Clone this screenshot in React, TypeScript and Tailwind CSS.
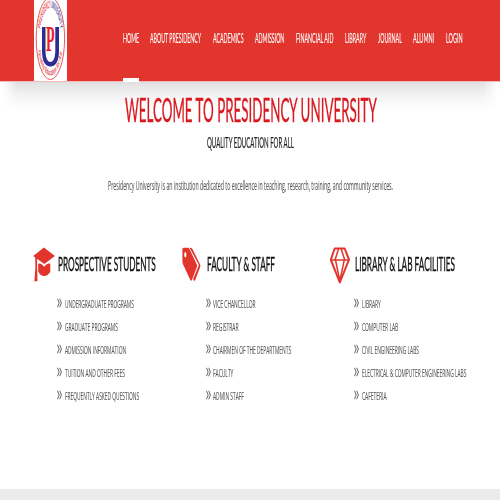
import { useLayoutEffect, useRef, useState } from "react";

type FitProps = { text: string; width: number; className?: string };

/* Condenses one line of text horizontally so that it fills the given width. */
function Fit({ text, width, className = "" }: FitProps) {
  const ref = useRef<HTMLSpanElement>(null);
  const [scale, setScale] = useState(0.6);
  useLayoutEffect(() => {
    const measure = () => {
      if (ref.current) setScale(width / ref.current.offsetWidth);
    };
    measure();
    document.fonts.ready.then(measure);
  }, [width, text]);
  return (
    <span className={`block shrink-0 overflow-visible whitespace-nowrap ${className}`} style={{ width }}>
      <span ref={ref} className="inline-block origin-left" style={{ transform: `scaleX(${scale})` }}>
        {text}
      </span>
    </span>
  );
}

const nav: [string, number][] = [
  ["HOME", 16],
  ["ABOUT PRESIDENCY", 51],
  ["ACADEMICS", 30.5],
  ["ADMISSION", 29.5],
  ["FINANCIAL AID", 37.5],
  ["LIBRARY", 21.5],
  ["JOURNAL", 24],
  ["ALUMNI", 21],
  ["LOGIN", 16.5],
];

function Logo() {
  return (
    <svg className="block h-[81px] w-[33px]" viewBox="0 0 33 81">
      <rect width="33" height="81" fill="#fff" />
      <ellipse cx="16.4" cy="38.5" rx="14.2" ry="41" fill="none" stroke="#e5454b" strokeWidth="0.9" />
      <g transform="translate(16.4 38.5) scale(1 2.9)">
        <path id="ring-top" d="M-10.300 -2.800A10.700 10.700 0 0 1 10.300 -2.800" fill="none" />
        <path id="ring-bottom" d="M-12.300 3.200A12.700 12.700 0 0 0 12.300 3.200" fill="none" />
        <g fontFamily="Liberation Sans, sans-serif" fontWeight="700">
          <text fontSize="3.7" textLength="27" lengthAdjust="spacingAndGlyphs">
            <textPath href="#ring-top" startOffset="0.3">
              <tspan fill="#df3d49">PRESIDENCY </tspan>
              <tspan fill="#41419c">UNIVERSITY</tspan>
            </textPath>
          </text>
          <text fontSize="2.9" fill="#df3d49" textLength="30" lengthAdjust="spacingAndGlyphs">
            <textPath href="#ring-bottom" startOffset="1.3">Quality Education for All</textPath>
          </text>
        </g>
      </g>
      <path d="M8 27h3.500v23c0 8 1.900 12 4.900 12s4.900-4 4.900-12V27H25v24c0 10-3.200 15.500-8.500 15.500S8 61 8 51z" fill="#2b2d93" />
      <text transform="translate(12 51) scale(.39 1)" fontFamily="Liberation Serif, serif" fontWeight="700" fontSize="36" fill="#ed1c2b">P</text>
    </svg>
  );
}

function CapIcon() {
  return (
    <svg className="block h-[36px] w-[22px]" viewBox="0 0 22 36" fill="#e2332d">
      <path d="M10.900 .5 21.900 8.900 11.300 17 .2 9z" />
      <path d="M2.200 10.300h1.900v9.200L4.500 34l-3.100.5 1-14.500z" />
      <path d="M5.200 16.500c2.300-.4 4.200.800 6 3.200 1.800-2.400 3.700-3.600 6.100-3.200v8c-1.500 3-3.700 4.500-6.100 4.500s-4.500-1.500-6-4.500z" />
    </svg>
  );
}

function TagsIcon() {
  return (
    <svg className="block h-[36px] w-[22px]" viewBox="0 0 22 36">
      <path fillRule="evenodd" fill="#e2332d" d="M.4 2.500Q.4.700 1.600.7H5.500q1.200 0 2 1.400l7.200 15.100q.7 1.400.2 2.900L10 32.800q-.9 2-1.800 0L1 17.200Q.4 15.800.4 14zM3.300 5.100q-1.100 0-1.100 2.700t1.100 2.700 1.100-2.700-1.100-2.700z" />
      <path fill="#e2332d" d="M7.500.8h1.200q1.200 0 2 1.600l7.300 14.800q.7 1.400.2 2.900l-4.900 12.700q-.8 2-1.700.5l-.5-1.200 5.300-12.700q.5-1.300-.1-2.600z" />
    </svg>
  );
}

function DiamondIcon() {
  return (
    <svg className="block h-[38px] w-[20px]" viewBox="0 0 20 38" fill="none" stroke="#e2332d" strokeWidth="1.500" strokeLinejoin="round">
      <path strokeWidth="2" d="M4.700 1.500h10L19 12.700 9.800 35.500.8 12.700z" />
      <path d="M.8 12.900H19M5.500 12.900 9.800 34l4.500-21.100M5 12.900 8.500 2M14.800 12.900 11.200 2" />
    </svg>
  );
}

function Chevrons() {
  return (
    <svg className="block h-[10px] w-[5px] shrink-0" viewBox="0 0 5 10" fill="none" stroke="#555" strokeWidth="0.9">
      <path d="M.5.8 2.200 5 .5 9.200M2.700.8 4.400 5 2.700 9.200" />
    </svg>
  );
}

type Column = { title: string; width: number; icon: () => React.JSX.Element; items: [string, number][] };

const columns: Column[] = [
  {
    title: "PROSPECTIVE STUDENTS",
    width: 98,
    icon: CapIcon,
    items: [
      ["UNDERGRADUATE PROGRAMS", 69],
      ["GRADUATE PROGRAMS", 53],
      ["ADMISSION INFORMATION", 61],
      ["TUITION AND OTHER FEES", 60],
      ["FREQUENTLY ASKED QUESTIONS", 74],
    ],
  },
  {
    title: "FACULTY & STAFF",
    width: 68,
    icon: TagsIcon,
    items: [
      ["VICE CHANCELLOR", 42.5],
      ["REGISTRAR", 25.5],
      ["CHAIRMEN OF THE DEPARTMENTS", 78],
      ["FACULTY", 20.5],
      ["ADMIN STAFF", 31],
    ],
  },
  {
    title: "LIBRARY & LAB FACILITIES",
    width: 100,
    icon: DiamondIcon,
    items: [
      ["LIBRARY", 19],
      ["COMPUTER LAB", 36],
      ["CIVIL ENGINEERING LABS", 57],
      ["ELECTRICAL & COMPUTER ENGINEERING LABS", 104.5],
      ["CAFETERIA", 24.5],
    ],
  },
];

export default function App() {
  return (
    <div className="flex h-[500px] w-[500px] flex-col overflow-hidden bg-white font-['Open_Sans',sans-serif]">
      <header className="flex h-[82px] shrink-0 border-b border-[#f4b9b6] bg-[#e2352e] pl-[34px]">
        <Logo />
        <nav className="ml-[55.500px] flex gap-[11.500px] font-['Lato',sans-serif] text-[12.500px] leading-[16px] text-white [-webkit-text-stroke:0.1px]">
          {nav.map(([label, width], i) => (
            <a key={label} className="flex h-[82px] flex-col justify-between pt-[31px]">
              <Fit text={label} width={width} />
              {i === 0 && <span className="h-[4px] w-full bg-white" />}
            </a>
          ))}
        </nav>
      </header>
      <div className="mx-[2px] h-[28px] shrink-0 bg-linear-to-b from-[#e0e0e0] via-[#f4f4f4] to-white mask-x-from-97% mask-x-to-100%" />
      <main className="-mt-[28px] flex grow flex-col">
        <section className="flex flex-col items-center pl-[1px] pt-[9px]">
          <Fit text="WELCOME TO PRESIDENCY UNIVERSITY" width={252} className="h-[38px] font-['Lato',sans-serif] text-[32px] leading-[38px] text-[#d91920] [-webkit-text-stroke:0.4px]" />
          <Fit text="QUALITY EDUCATION FOR ALL" width={87} className="mt-[3px] h-[20px] font-['Lato',sans-serif] text-[15px] leading-[20px] text-[#222] [-webkit-text-stroke:0.2px]" />
          <Fit text="Presidency University is an institution dedicated to excellence in teaching, research, training, and community services." width={285} className="mt-[24px] h-[20px] text-[12.500px] leading-[20px] text-[#555] [-webkit-text-stroke:0.1px]" />
        </section>
        <section className="mt-[51px] grid grid-cols-[148.500px_148.500px_1fr] pl-[33px]">
          {columns.map(({ title, width, icon: Icon, items }) => (
            <article key={title}>
              <div className="flex h-[38px]">
                <div className="w-[25px]">
                  <Icon />
                </div>
                <Fit text={title} width={width} className="pt-[5px] font-['Lato',sans-serif] text-[19.500px] leading-[24px] text-[#111] [-webkit-text-stroke:0.4px]" />
              </div>
              <ul className="mt-[7px] pl-[24px]">
                {items.map(([label, w]) => (
                  <li key={label} className="flex h-[22.900px] items-center">
                    <Chevrons />
                    <Fit text={label} width={w} className="ml-[2.500px] pt-[1px] text-[11.500px] leading-[16px] text-[#555] [-webkit-text-stroke:0.1px]" />
                  </li>
                ))}
              </ul>
            </article>
          ))}
        </section>
      </main>
      <footer className="h-[11px] shrink-0 bg-[#ebebeb]" />
    </div>
  );
}
